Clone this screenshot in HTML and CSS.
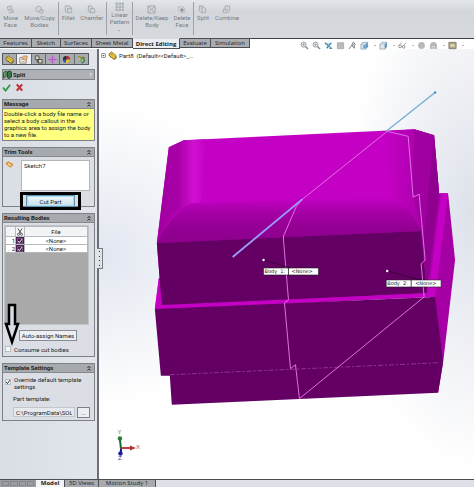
FILE: index.html
```html
<!DOCTYPE html>
<html lang="en">
<head>
<meta charset="utf-8">
<title>Split</title>
<link rel="stylesheet" href="styles.css">
</head>
<body>
<svg class="defs" aria-hidden="true">
  <symbol id="part" viewBox="0 0 10 10"><path d="M1 3.500 4 1l5 4v3L7 9.500 1.500 5.500z" fill="#c8a21c" stroke="#54420a" stroke-width=".8"/><path d="M1.500 4 7 8m-3-6.500L9 6M3.500 2.800l-1 1M5.500 4.300l-1 1M7.300 5.500l-1 1" stroke="#fff08a" stroke-width=".8"/></symbol>
  <symbol id="cube" viewBox="0 0 10 10"><path d="m1 3.500 2-2h5.500v5l-2 2.500H1z" fill="#dbe7f0" stroke="#7894a8" stroke-width=".7"/><path d="m6.500 3.500 2-2v5l-2 2.500z" fill="#4f8fc4"/><path d="M1 3.500h5.500V9" fill="none" stroke="#8fa6b6" stroke-width=".5"/></symbol>
  <symbol id="lens" viewBox="0 0 10 10"><circle cx="4" cy="4" r="2.800" fill="#edf1f4" stroke="#8c949c" stroke-width="1"/><path d="m6 6 3 3" stroke="#8c8684" stroke-width="1.500"/><path d="M4 2.500v3M2.500 4h3" stroke="#74808c" stroke-width=".6"/></symbol>
  <symbol id="chev" viewBox="0 0 6 8"><path d="m1.500 4L3 2.300 4.500 4m-3 2.500L3 4.800l1.500 1.700" fill="none" stroke="#222" stroke-width=".9"/></symbol>
  <symbol id="tick" viewBox="0 0 8 8"><path d="m1.500 4 1.800 2.200L6.500 1.500" fill="none" stroke="currentColor" stroke-width="1.200"/></symbol>
</svg>

<header class="ribbon">
  <div class="tools">
    <div class="group g1">
      <button class="tool"><svg viewBox="0 0 10 10"><path d="m1.500 2 4-1 1 4-4 1zM4 5l4 3.500V5M3 8.500h4" fill="#d3d6da" stroke="#a4a8ae"/></svg>Move<br>Face</button>
      <button class="tool"><svg viewBox="0 0 10 10"><path d="m1 3 3-2 3 2v3L4 8 1 6zM5 6l2-1 2 1v2L7 9.500 5 8z" fill="#d3d6da" stroke="#a4a8ae"/></svg>Move/Copy<br>Bodies</button>
    </div>
    <div class="group g2">
      <button class="tool"><svg viewBox="0 0 10 10"><path d="M1.500 1h3q4 0 4 4v3.500h-5L1.500 7zM4 4h4M4 4v4" fill="#d3d6da" stroke="#a4a8ae"/></svg>Fillet</button>
      <button class="tool"><svg viewBox="0 0 10 10"><path d="M1.500 1h3l4 4v3.500h-5L1.500 7zM4 4h4M4 4v4" fill="#d3d6da" stroke="#a4a8ae"/></svg>Chamfer</button>
    </div>
    <div class="group g3">
      <button class="tool pattern"><svg viewBox="0 0 10 10"><path d="M1 1h2v2H1zM4.500 1h2v2h-2zM8 1h1.500v2H8zM1 4.500h2v2H1zM4.500 4.500h2v2h-2zM8 4.500h1.500v2H8zM1 8h2v1.500H1zM4.500 8h2v1.500h-2zM8 8h1.500v1.500H8z" fill="none" stroke="#9ca0a6" stroke-width=".8"/></svg>Linear<br>Pattern<i class="caret"></i></button>
    </div>
    <div class="group g4">
      <button class="tool"><svg viewBox="0 0 10 10"><path d="M1 1h8v8H1zm1 1 6 6m0-6L2 8" fill="#d3d6da" stroke="#a0a4aa"/></svg>Delete/Keep<br>Body</button>
      <button class="tool"><svg viewBox="0 0 10 10"><path d="M1.500 2h5l2 2v4.500h-5l-2-2z" fill="#d8dadd" stroke="#b5b9be"/><circle cx="5.500" cy="5.500" r="2" fill="#8e9298"/></svg>Delete<br>Face</button>
    </div>
    <div class="group g5">
      <button class="tool"><svg viewBox="0 0 10 10"><path d="M1.500 1h3l4 3v4.500h-5l-2-2zM4.500 1v7.500" fill="#d3d6da" stroke="#a4a8ae"/></svg>Split</button>
      <button class="tool"><svg viewBox="0 0 10 10"><path d="M3.500 1h5v5l-2 2.500h-5v-4h2z" fill="#d3d6da" stroke="#a4a8ae"/><path d="M3.500 4.500h3v2h-3z" fill="#aeb2b8"/></svg>Combine</button>
    </div>
  </div>
  <nav class="tabs">
    <button class="t1">Features</button><button class="t2">Sketch</button><button class="t3">Surfaces</button><button class="t4">Sheet Metal</button><button class="t5 on">Direct Editing</button><button class="t6">Evaluate</button><button class="t7">Simulation</button>
  </nav>
</header>

<main class="work">
  <aside class="panel">
    <div class="modes">
      <button aria-label="Model tree"><svg viewBox="0 0 10 10"><use href="#part"/></svg></button>
      <button class="on" aria-label="Properties"><svg viewBox="0 0 10 10"><path d="M1 3h7v6H1z" fill="#fff" stroke="#8e7962"/><path d="m3 3 2-2h4v3L7 6z" fill="#e8b88a" stroke="#a46a32" stroke-width=".6"/><path d="M2.500 5h3M2.500 7h4" stroke="#777" stroke-width=".7"/></svg></button>
      <button aria-label="Configurations"><svg viewBox="0 0 10 10"><path d="M1.500 1h4v4h-4zM5 5h4v4H5z" fill="#ddd6b8" stroke="#4e4e4a"/><path d="M3.500 5v3H5" fill="none" stroke="#444"/></svg></button>
      <button aria-label="Dimensions"><svg viewBox="0 0 10 10"><circle cx="5" cy="5" r="2.800" fill="none" stroke="#c978d4"/><path d="M5 .5v9M.5 5h9" stroke="#b154c0"/></svg></button>
      <button aria-label="Appearance"><svg viewBox="0 0 10 10"><circle cx="5" cy="5" r="4" fill="#2456c0"/><path d="M5 5V1a4 4 0 0 0-4 4z" fill="#2c2c2c"/><path d="M5 5V1a4 4 0 0 1 4 4z" fill="#d92b1c"/><path d="M5 5h4a4 4 0 0 1-5 3.900z" fill="#f2c81e"/></svg></button>
      <button aria-label="Tools"><svg viewBox="0 0 10 10"><path d="M1 2h3l1 3-2 2" fill="#cfc05c" stroke="#4d8a43"/><path d="M5 3q4 0 3 4L5 9" fill="none" stroke="#338a40" stroke-width="1.500"/><path d="m6 1 3 2-2 2" fill="#c8583a"/></svg></button>
    </div>
    <h1 class="title"><svg class="ic" viewBox="0 0 10 10"><path d="m.5 3 3-2v6l-3 2z" fill="#6aa46c" stroke="#23552b"/><path d="m5 2 3-1 1.500 1.500v5L6 9.500 5 8z" fill="#35784a" stroke="#173e22"/></svg>Split<span class="help">?</span></h1>
    <div class="confirm">
      <button aria-label="OK"><svg viewBox="0 0 10 10"><path d="m1 5 3 3.500L9 2" fill="none" stroke="#33964a" stroke-width="2"/></svg></button>
      <button aria-label="Cancel"><svg viewBox="0 0 10 10"><path d="m2 1.500 6 7m0-7-6 7" stroke="#c4303a" stroke-width="2.400"/></svg></button>
    </div>

    <section class="box">
      <h2>Message<svg><use href="#chev"/></svg></h2>
      <p class="note">Double-click a body file name or<br>select a body callout in the<br>graphics area to assign the body<br>to a new file.</p>
    </section>

    <section class="box">
      <h2>Trim Tools<svg><use href="#chev"/></svg></h2>
      <div class="trim">
        <div class="pick">
          <svg class="ic" viewBox="0 0 10 10"><path d="m1 4 3-2 2 1.500 3 1.500-3 3-2-1.500z" fill="#f0b04c" stroke="#cf7b1d"/><path d="M3.500 4.500 6 6" stroke="#fff1cc"/></svg>
          <textarea aria-label="Trim tools">Sketch7</textarea>
        </div>
        <div class="mark"><button class="cut">Cut Part</button></div>
      </div>
    </section>

    <section class="box">
      <h2>Resulting Bodies<svg><use href="#chev"/></svg></h2>
      <div class="bodies">
        <div class="list">
          <table>
            <tr><th class="n"></th><th class="c"><svg class="cutter" viewBox="0 0 8 8"><path d="m2 .5 3 5m1-5-3 5" stroke="#333" stroke-width=".8"/><circle cx="2.500" cy="6.300" r="1" fill="none" stroke="#333" stroke-width=".7"/><circle cx="5.500" cy="6.300" r="1" fill="none" stroke="#333" stroke-width=".7"/></svg></th><th>File</th></tr>
            <tr><td class="n">1</td><td class="c"><input type="checkbox" checked aria-label="Body 1"><svg class="tk"><use href="#tick"/></svg></td><td>&lt;None&gt;</td></tr>
            <tr><td class="n">2</td><td class="c"><input type="checkbox" checked aria-label="Body 2"><svg class="tk"><use href="#tick"/></svg></td><td>&lt;None&gt;</td></tr>
          </table>
        </div>
        <button class="auto">Auto-assign Names</button>
        <label class="check"><span class="cb"><input type="checkbox"></span>Consume cut bodies</label>
        <svg class="arrow" viewBox="0 0 16 44"><path d="M5 2h6v19h3L8 39 2 21h3z" fill="#d9dce2" stroke="#000" stroke-width="2.500"/></svg>
      </div>
    </section>

    <section class="box">
      <h2>Template Settings<svg><use href="#chev"/></svg></h2>
      <div class="template">
        <label class="check"><span class="cb"><input type="checkbox" checked><svg class="tk"><use href="#tick"/></svg></span><span>Override default template<br>settings</span></label>
        <label class="lbl" for="tpl">Part template:</label>
        <div class="path"><input id="tpl" type="text" value="C:\ProgramData\SOLIDWORKS"><button>...</button></div>
      </div>
    </section>
    <div class="grip"><i></i><i></i><i></i><i></i></div>
  </aside>

  <div class="view">
    <svg class="scene" viewBox="98 49 376 430" preserveAspectRatio="xMidYMid meet">
      <defs>
        <linearGradient id="front" x1="0" y1="0" x2="0" y2="1"><stop offset="0" stop-color="#c400c4"/><stop offset=".35" stop-color="#a400a4"/><stop offset=".65" stop-color="#940094"/><stop offset="1" stop-color="#8c008c"/></linearGradient>
        <linearGradient id="left" x1="0" x2="1"><stop offset="0" stop-color="#a000a0"/><stop offset=".45" stop-color="#a800a8"/><stop offset=".75" stop-color="#d010d0"/><stop offset="1" stop-color="#c400c4"/></linearGradient>
        <linearGradient id="right" x1="0" x2="1"><stop offset="0" stop-color="#c400c4"/><stop offset=".5" stop-color="#b400b4"/><stop offset="1" stop-color="#a000a0"/></linearGradient>
      </defs>
      <path d="m439 193 9 0 7 67-12 103-5 30-6-80-8-80z" fill="#a400a4"/>
      <path d="m158 278-4 31 11 2 265-15-6-40z" fill="#c400c4"/>
      <path d="m168 147 15-7 231-11 20 6 5 58-12 97-266 16-5-63z" fill="#c400c4"/>
      <path d="m168 147 15-7 22-1-5 65-14 1q-16 6-30 38z" fill="url(#left)"/>
      <path d="m385 131 29-2 20 6-9 66-4 30q-10-22-28-31z" fill="url(#right)"/>
      <path d="m414 129 20 6 5 58-12 97-6-59-9-40z" fill="#a000a0"/>
      <path d="m434 135 5 58-12 97-4-50z" fill="#900090"/>
      <path d="M156 243q14-30 34-40l198-6q19 3 33 34z" fill="url(#front)"/>
      <path d="m156 243 265-12 6 62-266 13z" fill="#640064"/>
      <path d="m441 193 7 0-13 104-7-1z" fill="#c400c4"/>
      <path d="m158 278-4 31 281-12-1-4-273 12z" fill="#c400c4"/>
      <path d="m154 309 281-12 8 65-5 31-267 12-2-29h-9z" fill="#640064"/>
      <path d="m169 375 270-12" stroke="#99409a" stroke-width=".8" stroke-dasharray="5 2 2 2"/>
      <path d="m302 199 85-68 21 5 5 61 6-3 6 66-4 4 3 33-125 102-4-34-5 4-6-66 4-3-5-60v-4l13-30z" fill="none" stroke="#e070e2" stroke-width="1"/>
      <path d="m232 257 70-58" stroke="#9d9dff" stroke-width="1.800"/>
      <path d="m386 131 49-39" stroke="#71add9" stroke-width="1.300"/>
      <circle cx="435" cy="92" r="1.300" fill="#5591bb"/>
      <path d="m263 260 27 8m97 3 37 10" stroke="#31002f" stroke-width=".8"/>
      <circle cx="263" cy="260" r="1.200" fill="#fff"/><circle cx="387" cy="271" r="1.200" fill="#fff"/>
      <g class="callout">
        <path d="M263 268h55v7h-55zM386 280h55v7h-55z" fill="#fff" stroke="#222" stroke-width=".6"/>
        <path d="M288 268v7m123 5v7" stroke="#222" stroke-width=".8"/>
        <text x="264" y="273.500">Body  1:</text><text x="291" y="273.500">&lt;None&gt;</text>
        <text x="387" y="285.500">Body  2:</text><text x="415" y="285.500">&lt;None&gt;</text>
      </g>
      <path d="m120 449-1-9" stroke="#176b28" stroke-width="2"/><circle cx="119" cy="439" r="2.200" fill="#277b35"/>
      <path d="M120 448.500h10" stroke="#b53030" stroke-width="1.800"/><path d="m129 446 6 2.500-6 2.500z" fill="#b53030"/>
      <path d="M120 449v5" stroke="#16167c" stroke-width="2"/><circle cx="119.500" cy="454" r="2.200" fill="#1a1aa4"/>
      <g class="axis"><text x="116.500" y="434" fill="#4b8051">Y</text><text x="135" y="450" fill="#c45050">X</text><text x="117" y="461" fill="#3c3c9c">Z</text></g>
    </svg>
    <div class="overlay">
      <div class="tree"><span class="plus">+</span><svg class="ic" viewBox="0 0 10 10"><use href="#part"/></svg>Part8&nbsp; (Default&lt;&lt;Default&gt;_...</div>
      <div class="hud">
        <button aria-label="Zoom to fit"><svg viewBox="0 0 10 10"><use href="#lens"/></svg></button>
        <button aria-label="Zoom to area"><svg viewBox="0 0 10 10"><use href="#lens"/></svg></button>
        <button aria-label="Previous view"><svg viewBox="0 0 10 10"><path d="m1 2 6 5m1-5L3 8M6 8h3" stroke="#3b8db5" stroke-width="1.600"/><path d="m1 5 3-3 3 6" fill="none" stroke="#8bb9cd"/></svg></button>
        <button aria-label="Section view"><svg viewBox="0 0 10 10"><path d="M1.500 2h7v6.500h-7z" fill="#bbb" stroke="#aaa"/></svg></button>
        <button aria-label="Annotations"><svg viewBox="0 0 10 10"><path d="m1 9 3-4 3 3V4L4 5l2-4 2 3" fill="none" stroke="#777"/></svg></button>
        <button class="more" aria-label="View orientation"><svg viewBox="0 0 10 10"><use href="#cube"/><path d="M3.500 4.500h3V8h-3z" fill="#6aa6d0"/></svg><i class="caret"></i></button>
        <button class="more" aria-label="Display style"><svg viewBox="0 0 10 10"><use href="#cube"/></svg><i class="caret"></i></button>
        <button class="more" aria-label="Hide or show"><svg viewBox="0 0 10 10"><circle cx="2.300" cy="6" r="1.500" fill="none" stroke="#888"/><circle cx="6.300" cy="6.500" r="1.500" fill="none" stroke="#888"/><path d="m1 5 3-3m2 3 3-3" stroke="#888" stroke-width=".8"/></svg><i class="caret"></i></button>
        <button aria-label="Edit appearance"><svg viewBox="0 0 10 10"><circle cx="5" cy="5" r="3.800" fill="#b9b9bb"/></svg></button>
        <button class="more" aria-label="Apply scene"><svg viewBox="0 0 10 10"><path d="M1 9V6q0-5 4-5t4 5v3z" fill="#b7b7b9"/><path d="M3.500 9V6h3v3" fill="none" stroke="#ddd"/></svg><i class="caret"></i></button>
        <button class="more" aria-label="View settings"><svg viewBox="0 0 10 10"><path d="M1 1.500h8v7H1z" fill="#a9a594" stroke="#827d6e"/><path d="M2.500 3.500h5v3h-5z" fill="#e3d49c"/></svg><i class="caret"></i></button>
      </div>
    </div>
  </div>
</main>

<footer class="sheets">
  <div class="nav"><i></i><i></i><i></i><i></i></div>
  <button class="s1 on">Model</button><button class="s2">3D Views</button><button class="s3">Motion Study 1</button>
</footer>
</body>
</html>
```
FILE: styles.css
```css
* { box-sizing: border-box; }

body {
  margin: 0;
  min-height: 100vh;
  display: flex;
  flex-direction: column;
  font: 6px/7px Roboto, sans-serif;
  color: #222;
  background: #dde1e7;
}

button, input, textarea {
  font: inherit;
  color: inherit;
  margin: 0;
  padding: 0;
  border: 0;
  border-radius: 0;
  background: none;
}

svg { display: block; fill: none; }
.defs { position: absolute; width: 0; height: 0; }
.ic { width: 9px; height: 9px; flex: none; }

.caret {
  display: block;
  border: 1px solid transparent;
  border-top-color: #777;
  border-bottom: 0;
}

/* ribbon */
.ribbon { background: linear-gradient(#e2e5e9, #d3d7dc 12px, #d7dade); }
.tools { display: flex; height: 38px; padding-top: 2px; }
.group { display: flex; justify-content: space-around; height: 33px; border-right: 1px solid #9da1a7; }
.g1 { width: 59px; }
.g2 { width: 48px; }
.g3 { width: 26px; }
.g4 { width: 61px; }
.g5 { width: 48px; border: 0; }
.tool {
  display: flex;
  flex-direction: column;
  align-items: center;
  padding-top: 3px;
  color: #777b81;
  white-space: nowrap;
}
.tool svg { width: 9px; height: 9px; }
.pattern { padding-top: 0; }
.pattern .caret { margin-top: 5px; }

.tabs { display: flex; align-items: flex-start; height: 11px; background: linear-gradient(#3f4145 1px, #fff 1px); }
.tabs button {
  height: 10px;
  border: solid #4b4d51;
  border-width: 1px 1px 1px 0;
  background: #a9acb0;
  font: 6px/8px "Open Sans", sans-serif;
  color: #222;
  white-space: nowrap;
}
.tabs .on { height: 11px; background: #eceef1; border-top-color: #d7dade; font-weight: 700; }
.t1 { width: 32px; }
.t2 { width: 29px; }
.t3 { width: 31px; }
.t4 { width: 41px; }
.t5 { width: 47px; }
.t6 { width: 31px; }
.t7 { width: 39px; }

/* property panel */
.work { flex: 1; display: flex; }
.panel {
  position: relative;
  width: 99px;
  flex: none;
  padding: 4px 2px 0;
  border-right: 2px solid #6c6f75;
  background: linear-gradient(90deg, #d9dde4, #e2e6ec);
}
.modes { display: flex; width: 87px; height: 12px; border: 1px solid #55585d; }
.modes button { flex: 1; display: grid; place-items: center; border-right: 1px solid #66696e; background: #a8abb0; }
.modes button:last-child { border: 0; }
.modes .on { background: #eceef1; }
.modes svg { width: 9px; height: 9px; }
.title {
  display: flex;
  align-items: center;
  gap: 1px;
  height: 11px;
  margin: 4px 0 0;
  border: 1px solid #808388;
  background: #adb0b4;
  font: 700 6px/8px Roboto, sans-serif;
}
.help { margin-left: auto; padding-right: 2px; color: #e5e7ea; }
.confirm { display: flex; gap: 4px; padding: 3px 0 7px; }
.confirm svg { width: 9px; height: 9px; }

.box { margin-bottom: 6px; border: 1px solid #7d8085; background: #dbdfe5; }
.box h2 {
  display: flex;
  align-items: center;
  justify-content: space-between;
  height: 9px;
  margin: 0;
  padding: 0 2px 0 1px;
  border-bottom: 1px solid #85888d;
  background: #a6a9ad;
  font: 700 6px/8px Roboto, sans-serif;
  white-space: nowrap;
}
.box h2 svg { width: 6px; height: 8px; }
.note { margin: 0; padding: 1px 1px 2px; background: #ffff80; white-space: nowrap; }

.trim { padding: 3px 4px 2px 2px; }
.pick { display: flex; gap: 7px; }
.pick textarea {
  flex: 1;
  min-width: 0;
  height: 31px;
  padding: 1px 2px;
  border: 1px solid #b2b5ba;
  background: #fff;
  resize: none;
  overflow: hidden;
}
.mark { width: 61px; height: 18px; margin: 1px 0 -6px 15px; border: 3px solid #000; padding: 0 3px; }
.cut { display: block; width: 100%; height: 12px; border: 1px solid #5e93ad; background: linear-gradient(#edf7fb, #c9dfea); box-shadow: inset 0 0 0 1px #a8dcee; }

.bodies { position: relative; padding: 2px 5px 3px 1px; }
.list { height: 100px; border: 1px solid #c0c3c8; background: #a9a9a9; }
table { width: 100%; border-collapse: collapse; table-layout: fixed; background: #fff; }
th, td { height: 8px; padding: 0; border: 1px solid #b5b8bc; font-weight: 400; text-align: center; line-height: 6px; }
tr:first-child th { height: 10px; background: #f3f4f6; }
.n { width: 10px; text-align: right; }
.c { width: 9px; }
td.c { position: relative; background: #48204f; color: #fff; }
.c input { appearance: none; display: block; width: 6px; height: 6px; margin: auto; border: 1px solid #75507c; }
.cutter { width: 8px; height: 8px; }
.tk { width: 6px; height: 6px; position: absolute; inset: 0; margin: auto; pointer-events: none; }
.auto { display: block; height: 11px; width: 58px; margin: 5px 0 0 15px; border: 1px solid #898d92; background: #eceef1; line-height: 8px; white-space: nowrap; }
.check { display: flex; gap: 3px; white-space: nowrap; }
.bodies .check { margin: 5px 0 0 1px; }
.cb { position: relative; width: 6px; height: 6px; flex: none; }
.cb input { appearance: none; display: block; width: 6px; height: 6px; border: 1px solid #b9bdc3; background: #f6f7f9; }
.arrow { position: absolute; left: 1px; bottom: 9px; width: 16px; height: 44px; }

.template { padding: 3px 4px 2px 2px; }
.template .cb { margin-top: 3px; }
.lbl { display: block; margin: 5px 0 5px 8px; }
.path { display: flex; gap: 2px; margin-left: 8px; }
.path input { flex: 1; min-width: 0; height: 10px; padding: 0 2px; border: 1px solid #c2c6cb; background: #e6e9ed; }
.path button { width: 13px; height: 11px; border: 1px solid #7e8287; background: #eceef1; }

.grip {
  position: absolute;
  left: 97px;
  top: 199px;
  z-index: 1;
  width: 6px;
  height: 21px;
  display: flex;
  flex-direction: column;
  align-items: center;
  justify-content: space-around;
  border: 1px solid #777a80;
  border-left: 0;
  background: #dfe2e7;
}
.grip i { width: 1px; height: 1px; background: #333; }

/* graphics area */
.view {
  flex: 1;
  min-width: 0;
  position: relative;
  background:
    radial-gradient(ellipse 45% 35% at 0 48%, #e2e6f0, transparent),
    radial-gradient(ellipse 34% 60% at 100% 38%, #dde1ea, transparent),
    #fff;
}
.scene { position: absolute; inset: 0; width: 100%; height: 100%; }
.callout text { font: 5px "DejaVu Sans", sans-serif; fill: #222; white-space: pre; }
.axis text { font: 6px "Liberation Sans", sans-serif; }
.overlay { position: absolute; inset: -9px 0 auto 0; display: flex; justify-content: space-between; }
.tree { display: flex; align-items: center; height: 10px; margin-top: 10px; gap: 2px; white-space: nowrap; }
.plus { width: 5px; height: 5px; margin-left: 2px; border: 1px solid #999; border-radius: 1px; font-size: 4px; line-height: 3px; text-align: center; }
.hud { display: flex; gap: 3px; padding: 1px 10px 0 0; height: 10px; }
.hud button { display: flex; align-items: center; gap: 5px; }
.hud svg { width: 9px; height: 9px; }

/* sheet tabs */
.sheets { display: flex; height: 8px; border-top: 1px solid #4b4e53; background: #dde1e7; }
.nav { display: flex; width: 36px; padding: 1px 2px; gap: 1px; background: #9a9da2; }
.nav i { flex: 1; border: 1px solid #83868b; }
.sheets button { border-right: 1px solid #4e5156; background: #a6a9ae; font: 6px/7px "Open Sans", sans-serif; white-space: nowrap; overflow: hidden; }
.sheets .on { background: #f3f4f6; font-weight: 700; }
.s1 { width: 29px; }
.s2 { width: 34px; }
.s3 { width: 57px; }
```
